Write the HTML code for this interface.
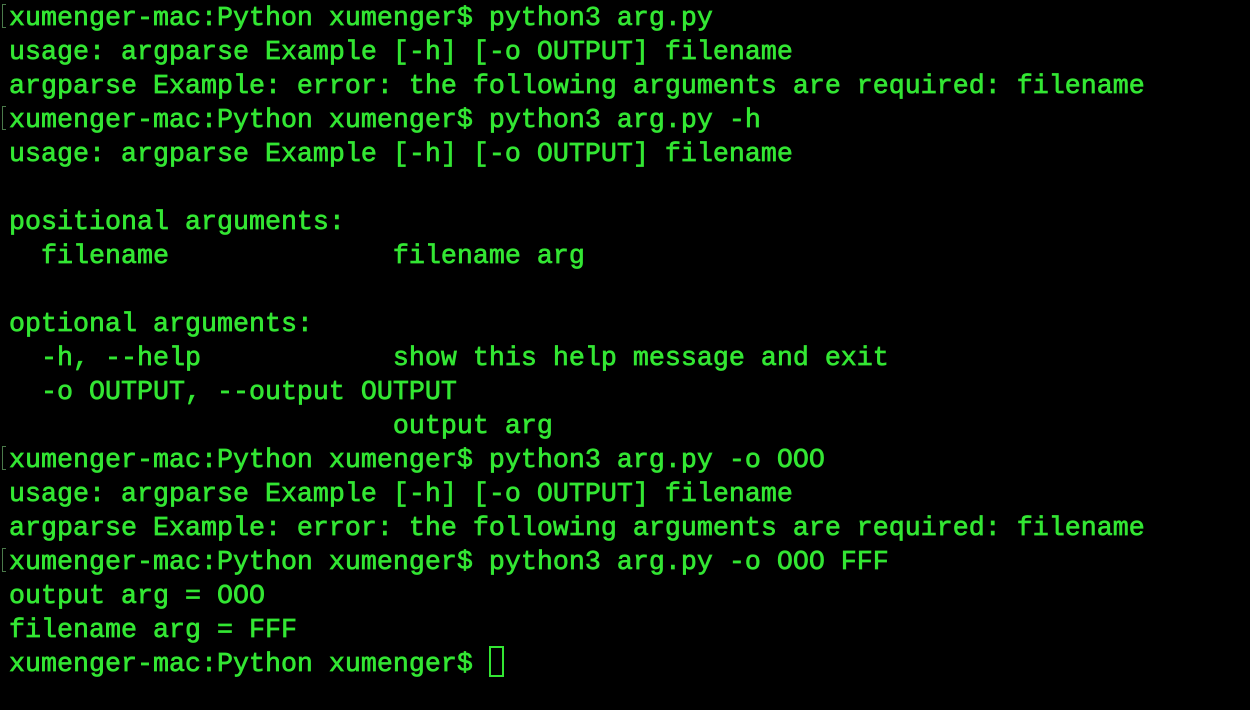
<!DOCTYPE html>
<html><head><style>
html,body{margin:0;padding:0;background:#000;width:1250px;height:710px;overflow:hidden}
pre{margin:0;position:absolute;left:9px;top:2px;font-family:"Liberation Mono",monospace;font-size:26.67px;line-height:34px;color:#33e633;-webkit-text-stroke:0.7px #33e633;white-space:pre}
.b{position:absolute;left:2px;width:4px;height:24px;border:1.5px solid #4a7a4a;border-right:none;box-sizing:border-box}
.cur{position:absolute;left:489px;top:646px;width:15px;height:31px;border:2px solid #33e633;box-sizing:border-box}
</style></head><body>
<div class="b" style="top:4px"></div>
<div class="b" style="top:106px"></div>
<div class="b" style="top:446px"></div>
<div class="b" style="top:548px"></div>
<pre>xumenger-mac:Python xumenger$ python3 arg.py
usage: argparse Example [-h] [-o OUTPUT] filename
argparse Example: error: the following arguments are required: filename
xumenger-mac:Python xumenger$ python3 arg.py -h
usage: argparse Example [-h] [-o OUTPUT] filename

positional arguments:
  filename              filename arg

optional arguments:
  -h, --help            show this help message and exit
  -o OUTPUT, --output OUTPUT
                        output arg
xumenger-mac:Python xumenger$ python3 arg.py -o OOO
usage: argparse Example [-h] [-o OUTPUT] filename
argparse Example: error: the following arguments are required: filename
xumenger-mac:Python xumenger$ python3 arg.py -o OOO FFF
output arg = OOO
filename arg = FFF
xumenger-mac:Python xumenger$ </pre>
<div class="cur"></div>
</body></html>
